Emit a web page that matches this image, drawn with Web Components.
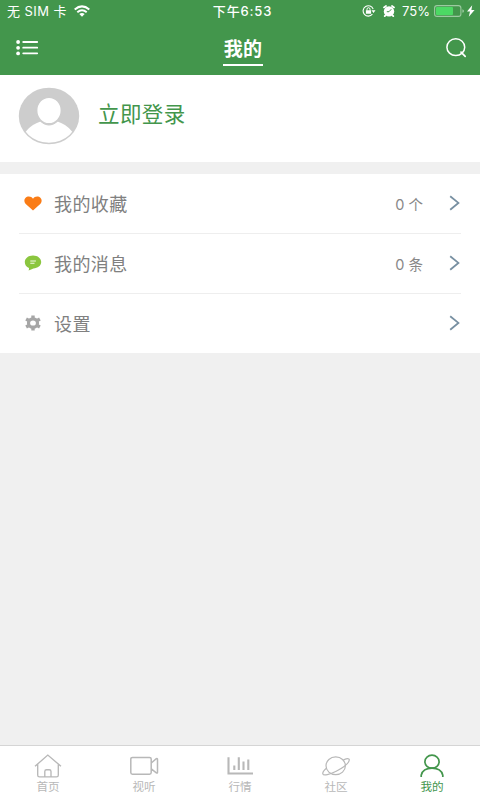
<!DOCTYPE html>
<html lang="zh-CN">
<head>
<meta charset="utf-8">
<title>我的</title>
<style>
html,body{margin:0;height:100%}
body{font-family:Inter,"Noto Sans CJK SC",sans-serif;background:#f0f0f0;overflow:hidden}
</style>
</head>
<body>
<profile-page></profile-page>
<script>
const define = (name, render) => {
  customElements.define(name, class extends HTMLElement {
    constructor() {
      super();
      this.attachShadow({mode: 'open'}).innerHTML = render(this);
    }
  });
};

// name: [width, height, svg body]
const icons = {
  wifi: [16, 12, '<g fill="none" stroke="currentColor" stroke-width="2"><path d="M.7 4.5Q8-1.7 15.3 4.5M3.3 7.2Q8 3.3 12.7 7.2"/></g><path d="M5.3 9Q8 6.9 10.7 9L8 11.8Z" fill="currentColor"/>'],
  lock: [14, 12, '<path d="M11.2 4.1A5.2 5.2 0 1 0 10.4 9.2" fill="none" stroke="currentColor" stroke-width="1.1"/><path d="M9.5 5.2h4L11.5 8ZM3.9 5.2h5.2v3.6H3.9Z" fill="currentColor"/><path d="M5 5.5V4.2a1.5 1.5 0 0 1 3 0v1.3" fill="none" stroke="currentColor"/>'],
  alarm: [12, 12, '<circle cx="6" cy="6.4" r="5.2" fill="currentColor"/><path d="M1 2.4 3 1M11 2.4 9 1M2.5 10.3l-.8.8M9.5 10.3l.8.8" stroke="currentColor" stroke-width="1.8" stroke-linecap="round"/><path d="M8.3 4.2 6 6.7H3.8" fill="none" stroke="#43964c" stroke-width="1"/>'],
  battery: [31, 12, '<rect x=".6" y=".6" width="26.3" height="10.8" rx="2.4" fill="none" stroke="#9ccaa1" stroke-width="1.1"/><rect x="2" y="2" width="17" height="8" rx="1" fill="#4cd964"/><path d="M28.4 4.2q1.6.4 1.6 1.8t-1.6 1.8Z" fill="#9ccaa1"/>'],
  bolt: [8, 12, '<path d="M5.2.2 0 6.6h3L1.8 11.8 7.6 4.9H4.4Z" fill="currentColor"/>'],
  menu: [23, 16, '<g fill="currentColor"><circle cx="2.1" cy="2" r="1.9"/><circle cx="2.1" cy="7.8" r="1.9"/><circle cx="2.1" cy="13.4" r="1.9"/></g><path d="M7.2 2h14M7.2 7.7h14M7.2 13.3h14" stroke="currentColor" stroke-width="1.8" stroke-linecap="round"/>'],
  search: [21, 20, '<ellipse cx="9.8" cy="9.2" rx="8.9" ry="8.4" fill="none" stroke="currentColor" stroke-width="1.5"/><path d="m15 14.2 4.2 4.2" stroke="currentColor" stroke-width="1.7" stroke-linecap="round"/>'],
  avatar: [62, 58, '<defs><clipPath id="c"><ellipse cx="31" cy="29" rx="28.8" ry="26.8"/></clipPath></defs><ellipse cx="31" cy="29" rx="30.2" ry="28.3" fill="#cdcdcd"/><g clip-path="url(#c)" fill="#fff"><path d="M7.5 45C12 39 18 36 22.5 34.5Q31 42.5 39.5 34.5C44 36 50 39 54.5 45C49 53 41 56 31 56S13 53 7.5 45Z"/><ellipse cx="31" cy="23.5" rx="12.5" ry="13.5" stroke="#cdcdcd" stroke-width="1.8"/></g>'],
  heart: [18, 15, '<path d="M9 14.6 1.5 7.8C-.5 5.4.2 2 3 .8 5.4-.1 7.7.8 9 2.8 10.3.8 12.6-.1 15 .8c2.8 1.2 3.5 4.6 1.5 7Z" fill="#fa7c16"/>'],
  chat: [18, 16, '<path d="M9 .4c4.8 0 8.2 2.9 8.2 6.7S13.7 13.3 9.4 13.5q-2.2 1-4.8 2 .5-1.3.4-2.5C2.4 12.2.8 9.8.8 7.1.8 3.3 4.2.4 9 .4Z" fill="#8bc63f"/><path d="M6.3 6h5.6M6.3 8.3h4.2" stroke="#f3fae9" stroke-width="1.1"/>'],
  gear: [18, 16, '<g fill="none" stroke="#a6a6a6"><ellipse cx="9" cy="8" rx="4.5" ry="4.2" stroke-width="3.2"/><path d="M9 .6v3M9 12.4v3M2.1 4.1l2.7 1.5M13.2 10.4l2.7 1.5M15.9 4.1l-2.7 1.5M4.8 10.4l-2.7 1.5" stroke-width="3.4"/></g>'],
  arrow: [12, 16, '<path d="m1.2 1.3 8.2 6.6-8.2 6.8" fill="none" stroke="#7890a2" stroke-width="1.8"/>'],
  home: [28, 24, '<path d="M1 12.3 13.8 1.1 27 12.3M3.7 10.3v11q0 1.6 1.8 1.6h17q1.8 0 1.8-1.6v-11M10.8 22.6v-5.2q0-1.7 1.7-1.7h2.8q1.7 0 1.7 1.7v5.2" fill="none" stroke="currentColor" stroke-width="1.35"/>'],
  video: [29, 24, '<path d="M2.5 3.4h17q1.7 0 1.7 1.7v13.5q0 1.7-1.7 1.7h-17Q.8 20.3.8 18.6V5.1q0-1.7 1.7-1.7ZM21.3 9l5-4.3q1.2-.5 1.2.8v12.7q0 1.3-1.2.7l-5-4" fill="none" stroke="currentColor" stroke-width="1.5"/>'],
  chart: [26, 24, '<path d="M1.5 3.3v16.2H26M7.3 11.5v4.6M11.8 3.3v12.8M16.5 7.5v8.6M21.3 5.5v10.6" fill="none" stroke="currentColor" stroke-width="2.1"/>'],
  planet: [28, 24, '<ellipse cx="13.7" cy="11.8" rx="9.7" ry="8.9" fill="none" stroke="currentColor" stroke-width="1.2"/><path d="M21 6.2C24 4.4 27.5 3.9 27.3 6 26.8 9.7 20.5 14 14.2 17.3 7.8 20.6 1.3 22 .8 19.8.5 18 2.1 16.1 4.6 14" fill="none" stroke="currentColor" stroke-width="1.2"/>'],
  user: [26, 24, '<ellipse cx="13" cy="7.7" rx="7.1" ry="6.5" fill="none" stroke="currentColor" stroke-width="1.7"/><path d="M2.2 23v-1.8Q4 14.2 13 14.2t10.8 7V23" fill="none" stroke="currentColor" stroke-width="1.7"/>']
};

define('app-icon', el => {
  const [w, h, body] = icons[el.getAttribute('name')];
  return `<style>:host{display:block;flex:none}svg{display:block}</style><svg width="${w}" height="${h}" viewBox="0 0 ${w} ${h}">${body}</svg>`;
});

define('status-bar', () => `<style>
:host{display:grid;grid-template-columns:1fr auto 1fr;height:22px;align-items:center;font-size:13px;line-height:22px;color:#fff}
div{display:flex;align-items:center;white-space:nowrap}
.left{padding-left:7px;gap:7px;letter-spacing:.45px}
.time{font-weight:500;letter-spacing:.85px;padding-left:5px}
.right{justify-content:flex-end;padding-right:5px}
.pct{margin:0 4px 0 7px}
.alarm{margin-left:7px}.bolt{margin-left:2px}
</style><div class="left"><span>无 SIM 卡</span><app-icon name="wifi"></app-icon></div><div class="time">下午6:53</div>
<div class="right"><app-icon name="lock"></app-icon><app-icon class="alarm" name="alarm"></app-icon><span class="pct">75%</span><app-icon name="battery"></app-icon><app-icon class="bolt" name="bolt"></app-icon></div>`);

define('nav-bar', () => `<style>
:host{display:flex;justify-content:space-between;height:53px;padding:0 13px 0 16px;box-sizing:border-box;color:#fff}
.menu{margin-top:18px}.search{margin-top:16px}
.title{margin:12px 0 0 1px;width:40px;height:32px;box-sizing:border-box;border-bottom:2px solid #fff;text-align:center;font-size:19px;line-height:32px;font-weight:600;letter-spacing:.3px;white-space:nowrap}
</style><app-icon class="menu" name="menu"></app-icon><div class="title"><slot></slot></div><app-icon class="search" name="search"></app-icon>`);

define('login-card', () => `<style>
:host{display:flex;height:87px;background:#fff;padding:12px 18px;box-sizing:border-box;color:#43964c;font-size:21.5px;line-height:32px;letter-spacing:.4px}
span{margin:11px 0 0 18px}
</style><app-icon name="avatar"></app-icon><span><slot></slot></span>`);

define('menu-row', el => `<style>
:host{display:flex;align-items:center;height:60px;margin:0 19px;padding:0 0 1px 5px;box-sizing:border-box;border-bottom:1px solid #eee;color:#808080}
:host([last]){border-color:transparent}
.label{margin:4px 0 0 12px;font-size:18px;letter-spacing:.4px;line-height:28px;flex:1}
.value{font-size:14.5px;line-height:22px;margin:3px 26px 0 0;color:#888}
</style><app-icon name="${el.getAttribute('icon')}"></app-icon><span class="label"><slot></slot></span><span class="value"><slot name="value"></slot></span><app-icon name="arrow"></app-icon>`);

define('tab-item', el => `<style>
:host{display:flex;flex-direction:column;align-items:center;flex:1;padding-top:8px;color:#b8b8b8;font-size:11.6px;line-height:18px}
:host([active]){color:#43964c}
</style><app-icon name="${el.getAttribute('icon')}"></app-icon><span><slot></slot></span>`);

define('profile-page', () => `<style>
:host{display:flex;flex-direction:column;width:480px;height:800px}
header{background:#43964c;height:75px}
.list{background:#fff;margin-top:12px;height:179px}
main{flex:1}
footer{display:flex;height:55px;box-sizing:border-box;background:#fff;border-top:1px solid #d5d5d5}
</style>
<header><status-bar></status-bar><nav-bar>我的</nav-bar></header>
<main>
  <login-card>立即登录</login-card>
  <div class="list">
    <menu-row icon="heart">我的收藏<span slot="value">0 个</span></menu-row>
    <menu-row icon="chat">我的消息<span slot="value">0 条</span></menu-row>
    <menu-row icon="gear" last>设置</menu-row>
  </div>
</main>
<footer>
  <tab-item icon="home">首页</tab-item>
  <tab-item icon="video">视听</tab-item>
  <tab-item icon="chart">行情</tab-item>
  <tab-item icon="planet">社区</tab-item>
  <tab-item icon="user" active>我的</tab-item>
</footer>`);
</script>
</body>
</html>
